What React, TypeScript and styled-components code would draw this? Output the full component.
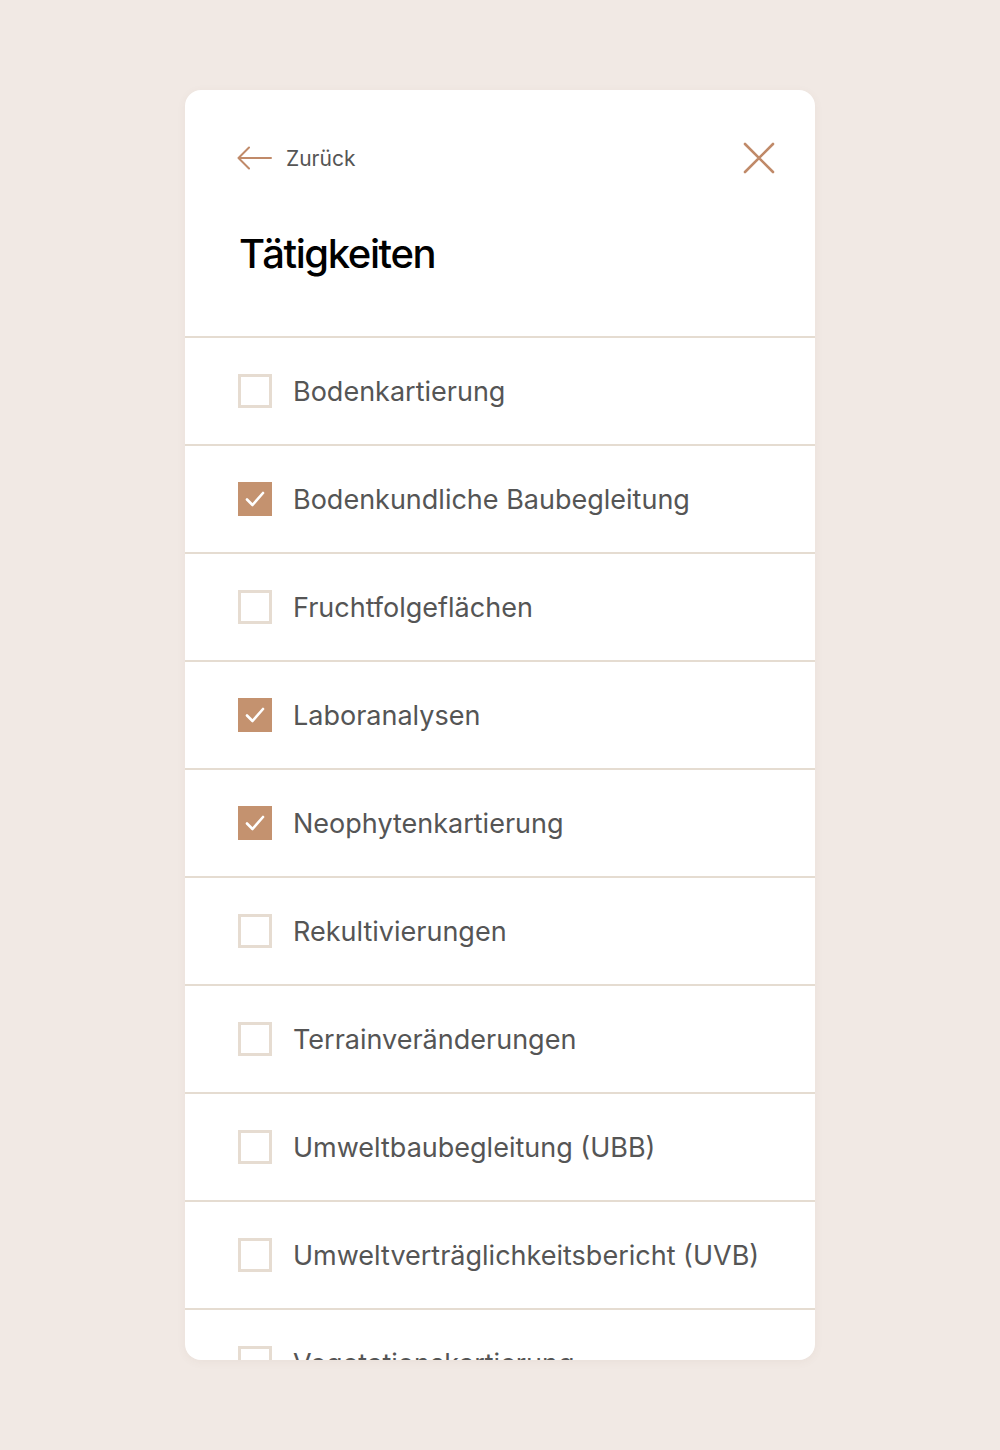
import React from "react";
import styled, { createGlobalStyle } from "styled-components";

const Global = createGlobalStyle`
  html, body { margin: 0; padding: 0; background: #f1e9e4; }
  body { font-family: Inter, "Noto Sans", sans-serif; }
`;

const Page = styled.div`
  min-height: 1450px;
  padding-top: 90px;
  box-sizing: border-box;
  display: flex;
  justify-content: center;
  align-items: flex-start;
`;

const Card = styled.div`
  width: 630px;
  height: 1270px;
  background: #ffffff;
  border-radius: 16px;
  overflow: hidden;
  box-shadow: 0 2px 10px rgba(120, 90, 60, 0.06);
  display: flex;
  flex-direction: column;
`;

const Header = styled.div`
  flex-shrink: 0;
  padding: 50px 40px 0 52px;
  height: 248px;
  box-sizing: border-box;
  border-bottom: 2px solid #e5dcd1;
  display: flex;
  flex-direction: column;
`;

const TopBar = styled.div`
  display: flex;
  align-items: center;
  justify-content: space-between;
  height: 36px;
`;

const BackButton = styled.button`
  display: flex;
  align-items: center;
  gap: 13px;
  background: none;
  border: 0;
  padding: 0;
  cursor: pointer;
  font-family: Inter, sans-serif;
  font-size: 21px;
  color: #555555;
`;

const CloseButton = styled.button`
  background: none;
  border: 0;
  padding: 0;
  display: flex;
  cursor: pointer;
`;

const Title = styled.h1`
  margin: 54px 0 0 2px;
  font-family: Inter, sans-serif;
  font-size: 40px;
  font-weight: 500;
  letter-spacing: -1.4px;
  color: #000000;
  line-height: 48px;
`;

const List = styled.ul`
  flex-shrink: 0;
  list-style: none;
  margin: 0;
  padding: 0;
`;

const Row = styled.li`
  height: 106px;
  border-bottom: 2px solid #e5dcd1;
  display: flex;
  align-items: center;
  padding-left: 53px;
  gap: 21px;
`;

const Box = styled.span<{ $checked: boolean }>`
  width: 34px;
  height: 34px;
  box-sizing: border-box;
  border: 3px solid ${(p) => (p.$checked ? "#c4926f" : "#e6dcd1")};
  background: ${(p) => (p.$checked ? "#c4926f" : "#ffffff")};
  display: flex;
  align-items: center;
  justify-content: center;
  flex-shrink: 0;
`;

const Label = styled.span`
  font-family: Inter, sans-serif;
  font-size: 27px;
  color: #555555;
`;

const items: [string, boolean][] = [
  ["Bodenkartierung", false],
  ["Bodenkundliche Baubegleitung", true],
  ["Fruchtfolgeflächen", false],
  ["Laboranalysen", true],
  ["Neophytenkartierung", true],
  ["Rekultivierungen", false],
  ["Terrainveränderungen", false],
  ["Umweltbaubegleitung (UBB)", false],
  ["Umweltverträglichkeitsbericht (UVB)", false],
  ["Vegetationskartierung", false],
];

export default function App() {
  return (
    <>
      <Global />
      <Page>
        <Card>
          <Header>
            <TopBar>
              <BackButton>
                <svg width="36" height="24" viewBox="0 0 36 24" fill="none">
                  <path
                    d="M34 12H2M12 1.5L1.5 12L12 22.5"
                    stroke="#c08a69"
                    strokeWidth="2"
                    strokeLinecap="round"
                    strokeLinejoin="round"
                  />
                </svg>
                Zurück
              </BackButton>
              <CloseButton>
                <svg width="32" height="32" viewBox="0 0 32 32" fill="none">
                  <path
                    d="M2 2L30 30M30 2L2 30"
                    stroke="#c08a69"
                    strokeWidth="2.6"
                    strokeLinecap="round"
                  />
                </svg>
              </CloseButton>
            </TopBar>
            <Title>Tätigkeiten</Title>
          </Header>
          <List>
            {items.map(([name, checked]) => (
              <Row key={name}>
                <Box $checked={checked}>
                  {checked && (
                    <svg width="22" height="18" viewBox="0 0 22 18" fill="none">
                      <path
                        d="M3 9.5L8.5 15L19 3"
                        stroke="#ffffff"
                        strokeWidth="2.6"
                        strokeLinecap="round"
                        strokeLinejoin="round"
                      />
                    </svg>
                  )}
                </Box>
                <Label>{name}</Label>
              </Row>
            ))}
          </List>
        </Card>
      </Page>
    </>
  );
}
